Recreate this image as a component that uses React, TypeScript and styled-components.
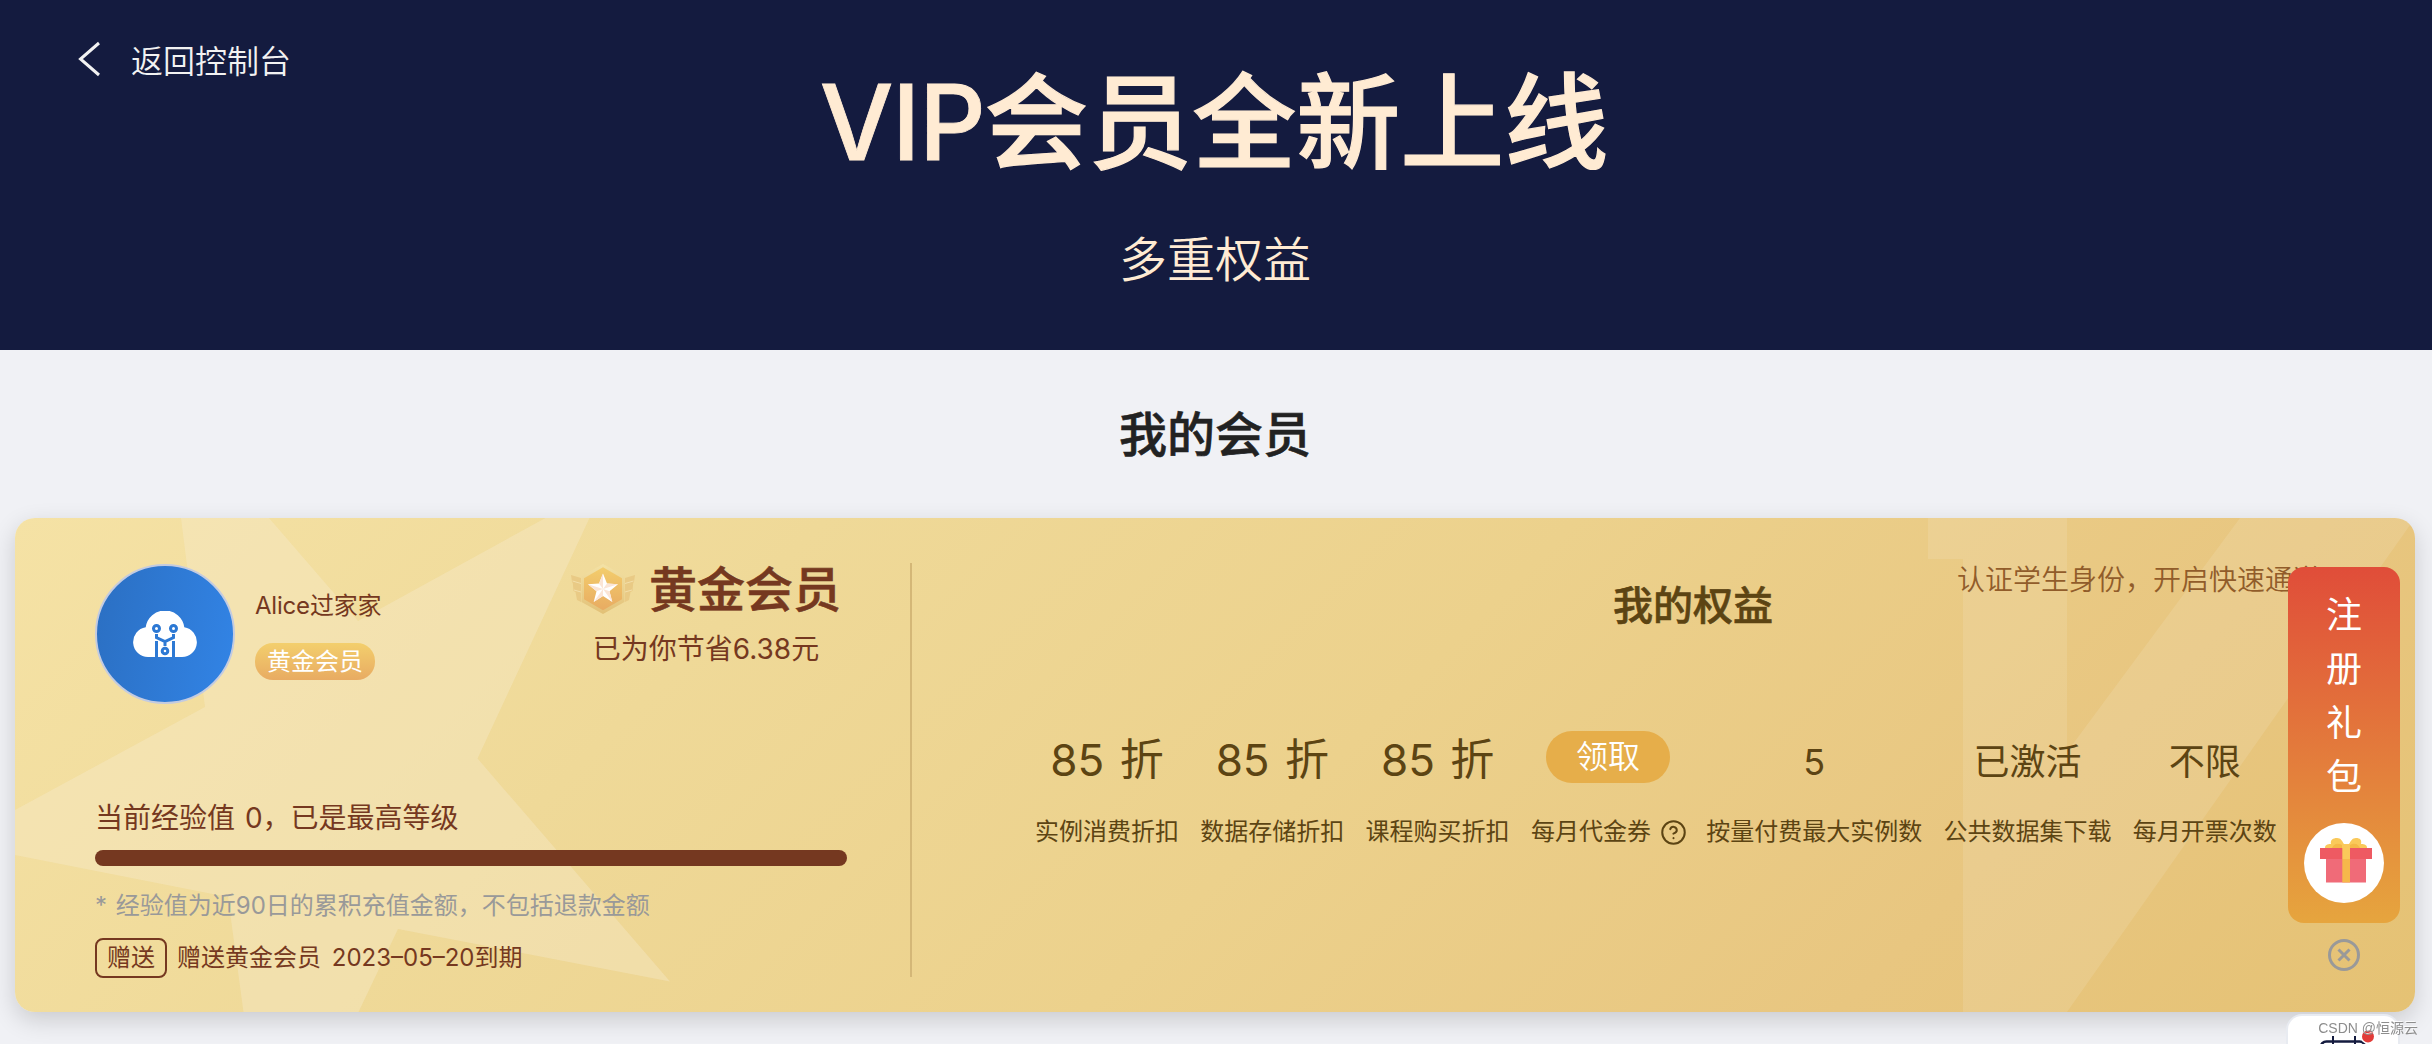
import type { ReactNode } from "react";
import styled, { createGlobalStyle } from "styled-components";
import { CircleHelp } from "lucide-react";

interface iBenefit {
  label: string;
  value?: string;
  large?: boolean;
  claimable?: boolean;
}

const benefits: iBenefit[] = [
  { label: "实例消费折扣", value: "85 折", large: true },
  { label: "数据存储折扣", value: "85 折", large: true },
  { label: "课程购买折扣", value: "85 折", large: true },
  { label: "每月代金券", claimable: true },
  { label: "按量付费最大实例数", value: "5" },
  { label: "公共数据集下载", value: "已激活" },
  { label: "每月开票次数", value: "不限" },
];

export default function App() {
  return (
    <Page>
      <GlobalStyle />
      <Header>
        <BackLink>
          <BackIcon />
          <span>返回控制台</span>
        </BackLink>
        <HeaderTitles>
          <h1>
            <span>VIP</span>会员全新上线
          </h1>
          <h2>多重权益</h2>
        </HeaderTitles>
      </Header>
      <SectionTitle>我的会员</SectionTitle>
      <Card>
        <CardBackground />
        <Member>
          <Profile>
            <Avatar>
              <CloudLogo />
            </Avatar>
            <UserInfo>
              <UserName>Alice过家家</UserName>
              <LevelTag>黄金会员</LevelTag>
            </UserInfo>
            <Rank>
              <RankName>
                <MedalIcon />
                <strong>黄金会员</strong>
              </RankName>
              <Saved>已为你节省6.38元</Saved>
            </Rank>
          </Profile>
          <Experience>当前经验值 0，已是最高等级</Experience>
          <Progress />
          <Note>* 经验值为近90日的累积充值金额，不包括退款金额</Note>
          <Gifted>
            <GiftedTag>赠送</GiftedTag>
            <GiftedText>赠送黄金会员 2023–05–20到期</GiftedText>
          </Gifted>
        </Member>
        <Rights>
          <RightsHeader>
            <h3>我的权益</h3>
            <StudentLink>认证学生身份，开启快速通道</StudentLink>
          </RightsHeader>
          <BenefitList>
            {benefits.map((benefit) => (
              <Benefit key={benefit.label} {...benefit} />
            ))}
          </BenefitList>
        </Rights>
      </Card>
      <Floating>
        <GiftPanel>
          <GiftText>
            {"注册礼包".split("").map((char) => (
              <span key={char}>{char}</span>
            ))}
          </GiftText>
          <GiftCircle>
            <GiftIcon />
          </GiftCircle>
        </GiftPanel>
        <CloseButton>
          <CloseIcon />
        </CloseButton>
        <ToolPanel>
          <CalendarIcon />
        </ToolPanel>
      </Floating>
      <Watermark>CSDN @恒源云</Watermark>
    </Page>
  );
}

const Benefit = ({ label, value, large, claimable }: iBenefit) => {
  const content: ReactNode = claimable ? (
    <ClaimButton>领取</ClaimButton>
  ) : (
    <BenefitValue $large={large}>{value}</BenefitValue>
  );
  return (
    <BenefitItem>
      <BenefitTop $start={claimable}>{content}</BenefitTop>
      <BenefitLabel>
        {label}
        {claimable && <CircleHelp size={27} strokeWidth={1.8} />}
      </BenefitLabel>
    </BenefitItem>
  );
};

const BackIcon = () => (
  <svg width="24" height="36" viewBox="0 0 24 36" fill="none">
    <path d="M22 2L3.5 18L22 34" stroke="#f2f2f2" strokeWidth="3" />
  </svg>
);

const CardBackground = () => (
  <Backdrop viewBox="15 518 2400 494" preserveAspectRatio="none">
    <path
      d="M181 518L205 707L15 810V855L228 897L243.500 1012H358.500L398 929L670 981.500L477.500 758.500L589.500 518H545.500L358 621L269 518Z"
      fill="#f8ebd0"
      fillOpacity=".36"
    />
    <path
      d="M1928 518H2067V752L2240 518H2415L2067 1012H1963V559H1928Z"
      fill="#fff"
      fillOpacity=".11"
    />
  </Backdrop>
);

const CloudLogo = () => (
  <svg width="64" height="46" viewBox="0 0 64 46" fill="none">
    <path
      d="M15 46A15 15 0 0 1 12.700 16.200A19.500 19.500 0 0 1 51.300 16.200A15 15 0 0 1 49 46Z"
      fill="#fff"
    />
    <g stroke="#2d79d4" strokeWidth="3">
      <circle cx="23.500" cy="17.500" r="3" />
      <circle cx="40.500" cy="17.500" r="3" />
      <circle cx="32" cy="40" r="2.800" />
      <path d="M23.500 23V26.500L32 30.500L40.500 26.500V23M32 30V35M23.500 30V46M40.500 30V46" />
    </g>
  </svg>
);

const MedalIcon = () => (
  <svg width="64" height="50" viewBox="0 0 64 50">
    <defs>
      <linearGradient id="medal" x1="0" y1="0" x2="0" y2="1">
        <stop offset="0" stopColor="#f3cd6c" />
        <stop offset="1" stopColor="#e8ab62" />
      </linearGradient>
      <linearGradient id="rim" x1="0" y1="0" x2="0" y2="1">
        <stop offset="0" stopColor="#f3e2a6" />
        <stop offset="1" stopColor="#e2c076" />
      </linearGradient>
    </defs>
    <path
      d="M0 11L10 14V38L6 36L4.500 28L2.500 27L1.800 19L1 18ZM64 11L54 14V38L58 36L59.500 28L61.500 27L62.200 19L63 18Z"
      fill="#e9ca85"
    />
    <path d="M1.500 17L10 19.500M3 26L10 28M62.500 17L54 19.500M61 26L54 28" stroke="#f3dfaa" />
    <path d="M32 0L53.500 12V38L32 50L10.500 38V12Z" fill="url(#rim)" />
    <path d="M32 3.300L51 14.300V35.300L32 46.300L13 35.300V14.300Z" fill="url(#medal)" />
    <path
      d="M32 9.500L36 19.500L47 20.200L38.500 27.200L41.300 38L32 32L22.700 38L25.500 27.200L17 20.200L28 19.500Z"
      fill="#fff"
    />
    <path
      d="M32 25L32 9.500L28 19.500ZM32 25L17 20.200L25.500 27.200ZM32 25L22.700 38L32 32ZM32 25L41.300 38L38.500 27.200ZM32 25L47 20.200L36 19.500Z"
      fill="#fbe5d6"
    />
  </svg>
);

const GiftIcon = () => (
  <svg width="52" height="45" viewBox="0 0 52 45">
    <path
      d="M5 10C5 7 7 6 11 6C10 2 13 0 17 0C21 0 22 3 24 6H29C31 3 32 0 36 0C40 0 42 2 41 6C45 6 47 7 47 10Z"
      fill="#fac95a"
    />
    <path d="M12 10C13 7 17 4 22 7V10ZM40 10C39 7 35 4 30 7V10Z" fill="#f5b847" />
    <path d="M6 21H46V44.500H6Z" fill="#f06b78" />
    <path d="M0 10H52V21H0Z" fill="#ee5a62" />
    <path d="M22.300 6H30V21H22.300Z" fill="#fac95a" />
    <path d="M22.300 21H30V44.500H22.300Z" fill="#f6b84b" />
  </svg>
);

const CloseIcon = () => (
  <svg width="32" height="32" viewBox="0 0 32 32" fill="none" stroke="#999" strokeWidth="3">
    <circle cx="16" cy="16" r="14.500" />
    <path d="M10.500 10.500L21.500 21.500M21.500 10.500L10.500 21.500" />
  </svg>
);

const CalendarIcon = () => (
  <svg width="60" height="48" viewBox="0 0 60 48" fill="none">
    <rect x="4.500" y="11.500" width="45" height="40" rx="6" stroke="#141b3f" strokeWidth="2.500" />
    <path d="M17 6V16M39 6V16" stroke="#141b3f" strokeWidth="2" />
    <circle cx="52" cy="6.500" r="7.500" fill="#fff" />
    <circle cx="52" cy="6.500" r="6" fill="#e23c39" />
  </svg>
);

const GlobalStyle = createGlobalStyle`
  * {
    box-sizing: border-box;
    margin: 0;
    padding: 0;
  }
  body {
    background: #f0f1f5;
    color: #222;
    font-family: Inter, "Noto Sans CJK SC", sans-serif;
    font-weight: 400;
  }
  svg {
    display: block;
    flex-shrink: 0;
  }
`;

const Page = styled.main`
  height: 1044px;
  overflow: hidden;
  background: #f0f1f5;
`;

const Header = styled.header`
  height: 350px;
  display: grid;
  grid-template-columns: 1fr auto 1fr;
  align-items: start;
  background: #141b3f;
`;

const BackLink = styled.a`
  display: flex;
  align-items: flex-start;
  gap: 30px;
  padding: 41px 0 0 77px;
  color: #f2f2f2;
  font-size: 32px;
  font-weight: 350;
  line-height: 42px;
  cursor: pointer;
`;

const HeaderTitles = styled.div`
  color: #ffebd3;
  text-align: center;

  h1 {
    height: 193px;
    padding: 53px 4px 0 0;
    font-size: 104px;
    font-weight: 500;
    line-height: 140px;
    -webkit-text-stroke: 1.2px #ffebd3;
  }
  h1 span {
    line-height: 1;
    letter-spacing: -1.5px;
    vertical-align: 1px;
    -webkit-text-stroke-width: 0.8px;
  }
  h2 {
    margin-top: 37px;
    padding-right: 2px;
    font-size: 48px;
    font-weight: 350;
    line-height: 60px;
  }
`;

const SectionTitle = styled.h2`
  height: 168px;
  padding: 55px 2px 0 0;
  font-size: 48px;
  font-weight: 500;
  line-height: 60px;
  text-align: center;
  -webkit-text-stroke: 0.6px #222;
`;

const Card = styled.section`
  position: relative;
  width: 2400px;
  height: 494px;
  margin-left: 15px;
  padding: 45px 0 0 80px;
  display: flex;
  border-radius: 20px;
  overflow: hidden;
  background: linear-gradient(135deg, #f5e2a5 0%, #efd998 28%, #ecd18c 54%, #e8c680 80%, #e5c274 100%);
  box-shadow: 0 8px 24px rgba(0, 0, 0, 0.16);
`;

const Backdrop = styled.svg`
  position: absolute;
  inset: 0;
  width: 100%;
  height: 100%;
`;

const Member = styled.div`
  position: relative;
  width: 817px;
  height: 414px;
  padding: 1px 63px 0 0;
  border-right: 2px solid #d4b777;
  color: #753820;
`;

const Profile = styled.div`
  display: flex;
  height: 140px;
`;

const Avatar = styled.div`
  width: 140px;
  height: 140px;
  display: flex;
  align-items: center;
  justify-content: center;
  border: 2px solid #c3cbe0;
  border-radius: 50%;
  background: linear-gradient(100deg, #2b6fc2, #3284e6);
`;

const UserInfo = styled.div`
  flex: 1;
  padding: 26px 0 0 20px;
`;

const UserName = styled.div`
  font-size: 24px;
  line-height: 32px;
  letter-spacing: -0.2px;
`;

const LevelTag = styled.span`
  display: block;
  width: 120px;
  height: 37px;
  margin-top: 21px;
  border-radius: 18px;
  background: linear-gradient(#f3cf6d, #e8ab62);
  color: #fff;
  font-size: 24px;
  line-height: 37px;
  text-align: center;
`;

const Rank = styled.div`
  margin-right: 6px;
`;

const RankName = styled.div`
  display: flex;
  gap: 14px;

  strong {
    font-size: 48px;
    font-weight: 500;
    line-height: 51px;
    -webkit-text-stroke: 0.6px #753820;
  }
`;

const Saved = styled.p`
  margin-top: 14px;
  font-size: 28px;
  line-height: 41px;
  text-align: center;
`;

const Experience = styled.p`
  margin-top: 94px;
  font-size: 28px;
  line-height: 40px;
  word-spacing: 2px;
`;

const Progress = styled.div`
  height: 16px;
  margin-top: 12px;
  border-radius: 8px;
  background: #753820;
`;

const Note = styled.p`
  margin-top: 24px;
  color: #999;
  font-size: 24px;
  line-height: 32px;
  word-spacing: 2px;
`;

const Gifted = styled.div`
  display: flex;
  gap: 10px;
  margin-top: 16px;
  font-size: 24px;
  line-height: 40px;
`;

const GiftedTag = styled.span`
  width: 72px;
  height: 40px;
  border: 2px solid #753820;
  border-radius: 8px;
  line-height: 36px;
  text-align: center;
`;

const GiftedText = styled.span`
  word-spacing: 4px;
`;

const Rights = styled.div`
  position: relative;
  flex: 1;
  padding-top: 1px;
  color: #5c4413;
`;

const RightsHeader = styled.div`
  display: grid;
  grid-template-columns: 1fr auto 1fr;
  align-items: start;
  height: 167px;
  margin-left: 59px;

  h3 {
    grid-column: 2;
    margin-top: 17px;
    font-size: 40px;
    font-weight: 500;
    line-height: 50px;
    -webkit-text-stroke: 0.6px #5c4413;
  }
`;

const StudentLink = styled.a`
  justify-self: end;
  margin-right: 94px;
  color: #915c2a;
  font-size: 28px;
  font-weight: 350;
  line-height: 32px;
  cursor: pointer;
`;

const BenefitList = styled.div`
  display: flex;
  gap: 21.3px;
  padding-left: 123px;
`;

const BenefitItem = styled.div`
  flex-shrink: 0;
`;

const BenefitTop = styled.div<{ $start?: boolean }>`
  display: flex;
  justify-content: ${(props) => (props.$start ? "flex-start" : "center")};
  height: 52px;
  padding-left: ${(props) => (props.$start ? "15px" : "0")};
`;

const BenefitValue = styled.span<{ $large?: boolean }>`
  font-size: ${(props) => (props.$large ? "44px" : "36px")};
  line-height: ${(props) => (props.$large ? "59px" : "63px")};
  word-spacing: ${(props) => (props.$large ? "3px" : "0")};
`;

const ClaimButton = styled.button`
  width: 124px;
  height: 52px;
  border: none;
  border-radius: 26px;
  background: #e6ae4a;
  color: #fff;
  font-family: inherit;
  font-size: 32px;
  font-weight: 350;
  line-height: 52px;
`;

const BenefitLabel = styled.div`
  display: flex;
  align-items: center;
  gap: 9px;
  height: 32px;
  margin-top: 33px;
  font-size: 24px;
  line-height: 32px;

  svg {
    margin-right: -2px;
  }
`;

const Floating = styled.aside`
  position: fixed;
  top: 567px;
  right: 32px;
  width: 112px;
  display: flex;
  flex-direction: column;
  align-items: center;
`;

const GiftPanel = styled.div`
  width: 112px;
  height: 356px;
  padding-top: 21px;
  display: flex;
  flex-direction: column;
  align-items: center;
  border-radius: 16px;
  background: linear-gradient(#e04d39, #e6a53e);
`;

const GiftText = styled.div`
  display: flex;
  flex-direction: column;
  color: #fff;
  font-size: 36px;
  line-height: 54px;
`;

const GiftCircle = styled.div`
  width: 80px;
  height: 80px;
  margin-top: 19px;
  padding: 15px 0 0 16px;
  border-radius: 50%;
  background: #fff;
`;

const CloseButton = styled.button`
  margin: 16px 0 45px;
  border: none;
  background: none;
`;

const ToolPanel = styled.div`
  width: 110px;
  height: 80px;
  margin-right: 2px;
  padding: 14px 0 0 28px;
  border-radius: 14px;
  background: #fff;
  box-shadow: 0 0 0 2px #e8ebf1;
`;

const Watermark = styled.div`
  position: fixed;
  right: 14px;
  bottom: 6px;
  color: #8d8d8d;
  font-family: "Liberation Sans", "Noto Sans CJK SC", sans-serif;
  font-size: 14px;
  line-height: 20px;
  text-shadow: -1px -1px 0 rgba(255, 255, 255, 0.8);
`;
